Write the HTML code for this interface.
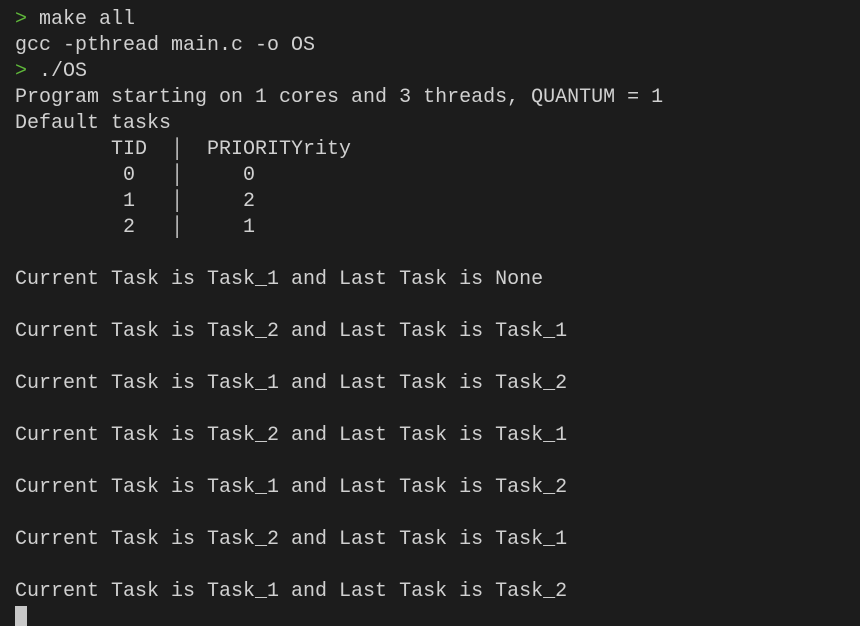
<!DOCTYPE html>
<html><head><style>
html,body{margin:0;padding:0;background:#1c1c1c;width:860px;height:626px;overflow:hidden}
pre{margin:0;padding:7px 0 0 15px;font-family:"Liberation Mono",monospace;font-size:20px;line-height:26px;color:#d0d0d0;white-space:pre}
.g{color:#5fb83a}
.cur{display:inline-block;width:12px;height:21px;background:#c8c8c8;vertical-align:-5px}
</style></head><body><pre><span class="g">&gt;</span> make all
gcc -pthread main.c -o OS
<span class="g">&gt;</span> ./OS
Program starting on 1 cores and 3 threads, QUANTUM = 1
Default tasks
        TID  │  PRIORITYrity
         0   │     0
         1   │     2
         2   │     1

Current Task is Task_1 and Last Task is None

Current Task is Task_2 and Last Task is Task_1

Current Task is Task_1 and Last Task is Task_2

Current Task is Task_2 and Last Task is Task_1

Current Task is Task_1 and Last Task is Task_2

Current Task is Task_2 and Last Task is Task_1

Current Task is Task_1 and Last Task is Task_2
<span class="cur"></span></pre></body></html>
